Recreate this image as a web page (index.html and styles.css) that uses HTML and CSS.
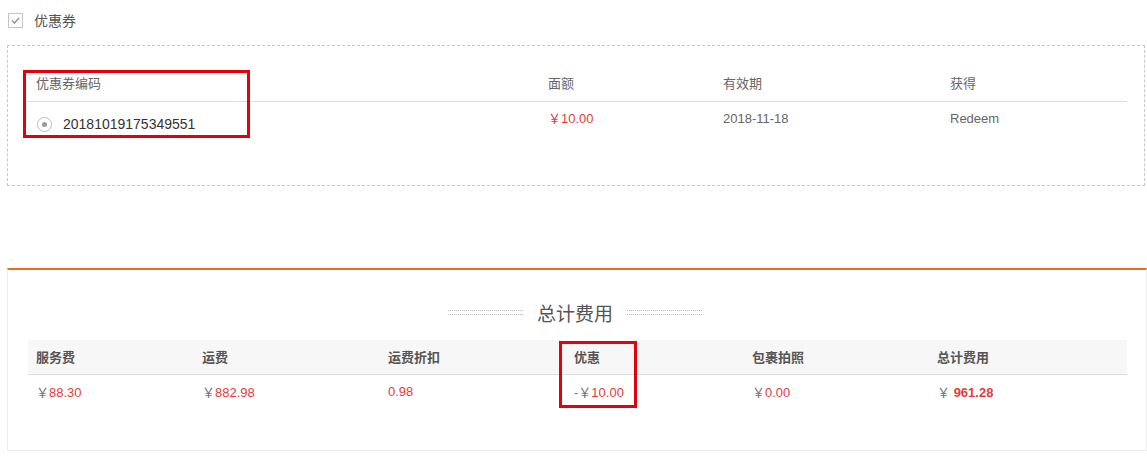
FILE: index.html
```html
<!DOCTYPE html>
<html lang="zh-CN">

<head>
    <meta charset="UTF-8">
    <title>优惠券</title>
    <link rel="stylesheet" href="styles.css">
</head>

<body>
    <div class="coupon-toggle">
        <span class="check">
            <svg width="9" height="7" viewBox="0 0 9 7"><polyline points="1,3.5 3.5,6 8,1" fill="none" stroke="#999" stroke-width="1.6"/></svg>
        </span>
        <span class="toggle-label">优惠券</span>
    </div>

    <div class="coupon-box">
        <table class="coupon-table">
            <thead>
                <tr>
                    <th class="c-code">优惠券编码</th>
                    <th class="c-value">面额</th>
                    <th class="c-date">有效期</th>
                    <th class="c-from">获得</th>
                </tr>
            </thead>
            <tbody>
                <tr>
                    <td class="code"><span class="radio"></span>20181019175349551</td>
                    <td class="red">￥10.00</td>
                    <td>2018-11-18</td>
                    <td>Redeem</td>
                </tr>
            </tbody>
        </table>
        <div class="mark mark-code"></div>
    </div>

    <div class="total-box">
        <h3 class="total-title"><span class="deco"></span>总计费用<span class="deco"></span></h3>
        <table class="fee-table">
            <thead>
                <tr>
                    <th class="f1">服务费</th>
                    <th class="f2">运费</th>
                    <th class="f3">运费折扣</th>
                    <th class="f4">优惠</th>
                    <th class="f5">包裹拍照</th>
                    <th class="f6">总计费用</th>
                </tr>
            </thead>
            <tbody>
                <tr>
                    <td><span class="yen">￥</span><span class="red">88.30</span></td>
                    <td><span class="yen">￥</span><span class="red">882.98</span></td>
                    <td><span class="red">0.98</span></td>
                    <td><span class="yen">-￥</span><span class="red">10.00</span></td>
                    <td><span class="yen">￥</span><span class="red">0.00</span></td>
                    <td><span class="yen">￥ </span><span class="red total">961.28</span></td>
                </tr>
            </tbody>
        </table>
        <div class="mark mark-discount"></div>
    </div>
</body>

</html>
```

FILE: styles.css
```css
* {
    margin: 0;
    padding: 0;
    box-sizing: border-box;
}

body {
    font-family: "Liberation Sans", "Noto Sans CJK SC", sans-serif;
    color: #666;
    background: #fff;
    width: 1147px;
}

table {
    border-collapse: collapse;
    table-layout: fixed;
}

th {
    text-align: left;
}

.red {
    color: #e23c3c;
}

/* top checkbox */
.coupon-toggle {
    display: flex;
    align-items: center;
    height: 40px;
    padding: 0 0 0 8px;
}

.check {
    width: 15px;
    height: 15px;
    border: 1px solid #c4c4c4;
    display: flex;
    align-items: center;
    justify-content: center;
}

.toggle-label {
    margin-left: 11px;
    font-size: 14px;
    color: #555;
}

/* coupon list */
.coupon-box {
    position: relative;
    margin: 5px 2px 0 7px;
    height: 141px;
    border: 1px dashed #c8c8c8;
    padding: 22px 17px 0 19px;
}

.coupon-table {
    width: 1100px;
}

.coupon-table th {
    font-weight: normal;
    font-size: 13px;
    color: #666;
    height: 33px;
    padding: 0 0 4px 9px;
    border-bottom: 1px solid #ddd;
}

.coupon-table td {
    font-size: 13px;
    line-height: 16px;
    height: 40px;
    vertical-align: top;
    padding: 9px 0 0 9px;
}

.coupon-table .c-code { width: 512px; }
.coupon-table .c-value { width: 175px; }
.coupon-table .c-date { width: 227px; }

.coupon-table .code {
    font-size: 14px;
    color: #333;
    padding-top: 14px;
}

.radio {
    display: inline-block;
    width: 15px;
    height: 15px;
    border: 1px solid #bbb;
    border-radius: 50%;
    vertical-align: -3px;
    margin: 0 11px 0 1px;
    position: relative;
}

.radio::after {
    content: "";
    position: absolute;
    left: 4px;
    top: 4px;
    width: 5px;
    height: 5px;
    border-radius: 50%;
    background: #999;
}

/* annotation boxes */
.mark {
    position: absolute;
    border: 3px solid #e3000f;
}

.mark-code {
    left: 15px;
    top: 24px;
    width: 227px;
    height: 68px;
}

.mark-discount {
    left: 551px;
    top: 71px;
    width: 78px;
    height: 67px;
}

/* totals */
.total-box {
    position: relative;
    margin: 82px 0 0 7px;
    height: 183px;
    border: 1px solid #eee;
    border-top: 2px solid #ee6b1c;
    padding: 0 18px 0 20px;
}

.total-title {
    display: flex;
    align-items: center;
    justify-content: center;
    height: 30px;
    margin: 27px 0 13px;
    font-size: 19px;
    font-weight: normal;
    color: #555;
    padding-right: 6px;
}

.deco {
    width: 75px;
    height: 5px;
    border-top: 1px dotted #bbb;
    border-bottom: 1px dotted #bbb;
    margin: 0 14px;
}

.fee-table {
    width: 1099px;
}

.fee-table th {
    height: 34px;
    background: #f7f7f7;
    border-bottom: 1px solid #ddd;
    font-size: 13px;
    font-weight: bold;
    color: #555;
    padding-left: 8px;
}

.fee-table td {
    height: 35px;
    font-size: 13px;
    padding-left: 8px;
}

.fee-table .f1 { width: 166px; }
.fee-table .f2 { width: 186px; }
.fee-table .f3 { width: 186px; }
.fee-table .f4 { width: 178px; }
.fee-table .f5 { width: 185px; }

.yen {
    color: #777;
}

.total {
    font-weight: bold;
    font-size: 13px;
}
```
